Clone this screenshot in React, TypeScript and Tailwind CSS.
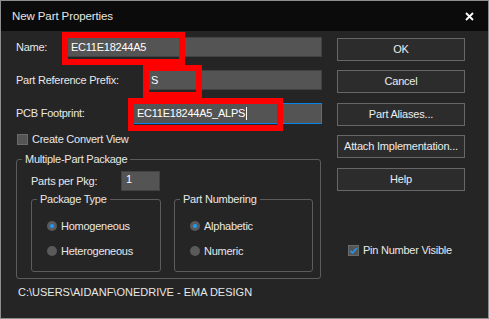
import React from 'react';

const font = { fontFamily: '"Liberation Sans", Arial, sans-serif' };

function Radio({ label, checked }: { label: string; checked?: boolean }) {
  return (
    <div className="flex items-center h-[14px] gap-[4px]">
      <span className="w-[10px] h-[10px] rounded-full bg-[#5a5a5a] flex items-center justify-center">
        {checked && <span className="w-[4px] h-[4px] rounded-full bg-[#1c9bff]" />}
      </span>
      <span>{label}</span>
    </div>
  );
}

function Button({ label, className = '' }: { label: string; className?: string }) {
  return (
    <button className={`h-[23px] w-full bg-[#2c2c2c] border border-[#676767] text-[#ececec] text-[11px] tracking-[-0.2px] ${className}`}>
      {label}
    </button>
  );
}

export default function App() {
  return (
    <div
      className="relative w-[489px] h-[319px] border border-[#8e8e8e] bg-[#252525] text-[#e8e8e8] text-[11px] leading-[13px] tracking-[-0.25px] overflow-hidden"
      style={font}
    >
      {/* title bar */}
      <div className="h-[30px] bg-[#0b0b0b] flex items-center justify-between pl-[11px] pr-[14px]">
        <span className="text-[11.5px] text-[#e6e6e6] tracking-[-0.1px]">New Part Properties</span>
        <svg width="9" height="9" viewBox="0 0 9 9">
          <path d="M1 1 L8 8 M8 1 L1 8" stroke="#ffffff" strokeWidth="1.8" />
        </svg>
      </div>

      <div className="flex pl-[15px]">
        {/* left column */}
        <div className="w-[306px] flex flex-col pt-[6px]">
          <div className="flex items-center h-[20px]">
            <span className="w-[51px]">Name:</span>
            <div className="flex-1 h-full bg-[#545454] border border-[#424242] flex items-center pl-[3px] text-white">
              EC11E18244A5
            </div>
          </div>
          <div className="flex items-center h-[20px] mt-[13px]">
            <span className="w-[131px]">Part Reference Prefix:</span>
            <div className="flex-1 h-full bg-[#545454] border border-[#424242] flex items-center pl-[3px] text-white">
              S
            </div>
          </div>
          <div className="flex items-center h-[21px] mt-[13px]">
            <span className="w-[117px]">PCB Footprint:</span>
            <div className="flex-1 h-full bg-[#545454] border border-[#0a84e8] flex items-center pl-[3px] text-white">
              EC11E18244A5_ALPS
              <span className="w-px h-[13px] bg-white ml-px" />
            </div>
          </div>
          <div className="flex items-center h-[13px] mt-[9px] gap-[4px] pl-px">
            <span className="w-[11px] h-[11px] bg-[#555555] border border-[#6a6a6a]" />
            <span>Create Convert View</span>
          </div>

          <fieldset className="mt-[7px] w-[305px] border border-[#5c5c5c] rounded-[3px] pb-[6px]">
            <legend className="ml-[5px] px-[3px]">Multiple-Part Package</legend>
            <div className="flex items-center mt-[5px] pl-[14px]">
              <span className="w-[90px]">Parts per Pkg:</span>
              <div className="w-[39px] h-[20px] bg-[#545454] border border-[#424242] pl-[4px] pt-[1px] text-white">1</div>
            </div>
            <div className="flex gap-[13px] pl-[14px] mt-[2px]">
              <fieldset className="w-[130px] h-[79px] border border-[#5c5c5c] rounded-[3px] pl-[15px]">
                <legend className="ml-[-10px] px-[3px]">Package Type</legend>
                <div className="mt-[13px] flex flex-col gap-[11px]">
                  <Radio label="Homogeneous" checked />
                  <Radio label="Heterogeneous" />
                </div>
              </fieldset>
              <fieldset className="w-[139px] h-[79px] border border-[#5c5c5c] rounded-[3px] pl-[15px]">
                <legend className="ml-[-10px] px-[3px]">Part Numbering</legend>
                <div className="mt-[13px] flex flex-col gap-[11px]">
                  <Radio label="Alphabetic" checked />
                  <Radio label="Numeric" />
                </div>
              </fieldset>
            </div>
          </fieldset>

          <div className="mt-[7px] pl-[2px] tracking-normal">C:\USERS\AIDANF\ONEDRIVE - EMA DESIGN</div>
        </div>

        {/* right column */}
        <div className="ml-[15px] w-[128px] flex flex-col pt-[7px]">
          <Button label="OK" />
          <Button label="Cancel" className="mt-[9px]" />
          <Button label="Part Aliases..." className="mt-[10px]" />
          <Button label="Attach Implementation..." className="mt-[9px]" />
          <Button label="Help" className="mt-[10px]" />
          <div className="flex items-center h-[13px] mt-[53px] ml-[11px] gap-[4px]">
            <span className="w-[11px] h-[11px] bg-[#555555] border border-[#6a6a6a] flex items-center justify-center">
              <svg width="9" height="9" viewBox="0 0 9 9">
                <path d="M1.5 4.8 L3.6 7 L7.8 2" stroke="#1c9bff" strokeWidth="1.5" fill="none" />
              </svg>
            </span>
            <span>Pin Number Visible</span>
          </div>
        </div>
      </div>

      {/* red annotation boxes */}
      <div className="absolute left-[61px] top-[31px] w-[123px] h-[33px] border-[6px] border-[#ff0000]" />
      <div className="absolute left-[142px] top-[64px] w-[59px] h-[33px] border-[6px] border-[#ff0000]" />
      <div className="absolute left-[127px] top-[97px] w-[155px] h-[33px] border-[6px] border-[#ff0000]" />
    </div>
  );
}
